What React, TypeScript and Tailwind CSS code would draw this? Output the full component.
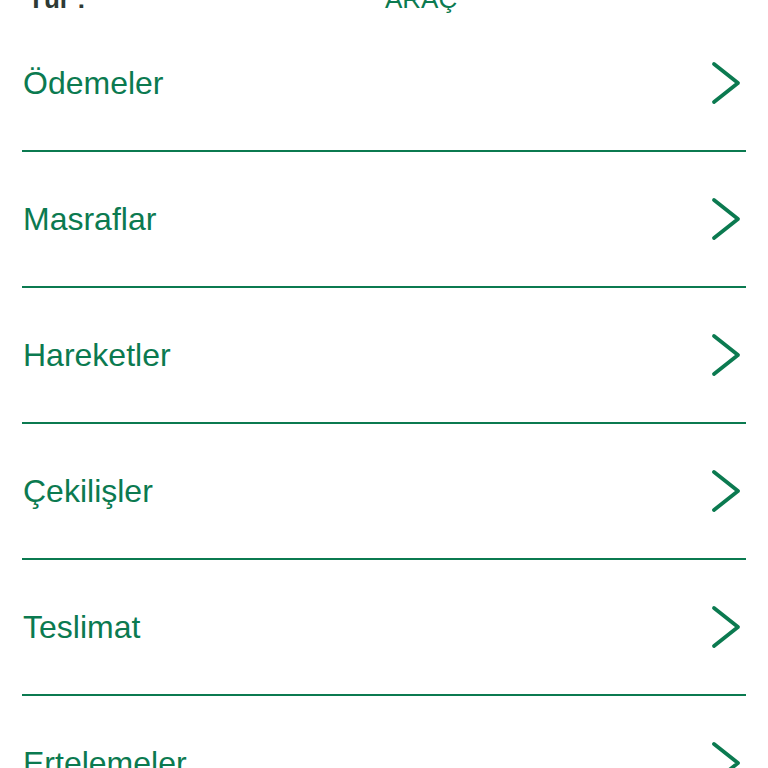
const items = ['Ödemeler', 'Masraflar', 'Hareketler', 'Çekilişler', 'Teslimat', 'Ertelemeler'];

const Chevron = () => (
    <svg width="32" height="44" viewBox="0 0 32 44" fill="none" className="mr-[4px]">
        <polyline points="4,3 28,22 4,41" stroke="#0b7a50" strokeWidth="3.8" strokeLinecap="round" strokeLinejoin="round" />
    </svg>
);

export default function App() {
    return (
        <div className="w-[768px] h-[768px] overflow-hidden bg-white" style={{ fontFamily: '"Liberation Sans", Arial, sans-serif' }}>
            {/* Header info row, scrolled partly out of view */}
            <div className="-mt-[14px] h-[30px] flex items-start text-[26px] leading-[26px]">
                <span className="w-[385px] pl-[28px] font-bold text-[#2e3a34]">Tür :</span>
                <span className="text-[#0b7a50]">ARAÇ</span>
            </div>

            <div className="flex flex-col">
                {items.map((item) => (
                    <div key={item} className="mx-[22px] h-[136px] shrink-0 flex items-center justify-between border-b-2 border-[#0b7a50]">
                        <span className="text-[32px] text-[#0b7a50] pl-[1px]">{item}</span>
                        <Chevron />
                    </div>
                ))}
            </div>
        </div>
    );
}
